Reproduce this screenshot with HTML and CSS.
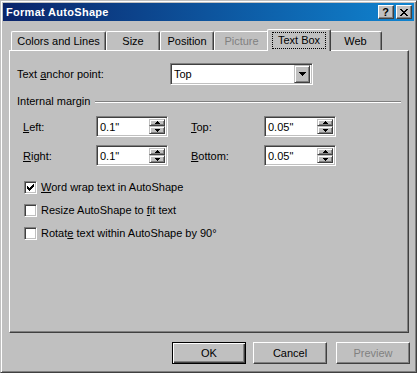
FILE: index.html
```html
<!DOCTYPE html>
<html>
<head>
<meta charset="utf-8">
<title>Format AutoShape</title>
<link rel="stylesheet" href="styles.css">
</head>
<body>
<div class="window">
  <div class="titlebar">
    <span class="title">Format AutoShape</span>
    <div class="caption-btns">
      <span class="cbtn help">?</span>
      <span class="cbtn close"><svg width="8" height="7" viewBox="0 0 8 7" shape-rendering="crispEdges"><path d="M0 0h2v1H0zM6 0h2v1H6zM1 1h2v1H1zM5 1h2v1H5zM2 2h4v1H2zM3 3h2v1H3zM2 4h4v1H2zM1 5h2v1H1zM5 5h2v1H5zM0 6h2v1H0zM6 6h2v1H6z"/></svg></span>
    </div>
  </div>

  <div class="sheet">
    <div class="tabs">
      <div class="tab w1">Colors and Lines</div>
      <div class="tab w2">Size</div>
      <div class="tab w3">Position</div>
      <div class="tab w4 disabled">Picture</div>
      <div class="tab w5 active"><span class="focus">Text Box</span></div>
      <div class="tab w6">Web</div>
    </div>
    <div class="panel">
      <div class="anchor-row">
        <span class="anchor-label">Text <u>a</u>nchor point:</span>
        <div class="combo">
          <span class="combo-text">Top</span>
          <span class="combo-btn"><svg width="7" height="4" viewBox="0 0 7 4" shape-rendering="crispEdges"><path d="M0 0h7v1H0zM1 1h5v1H1zM2 2h3v1H2zM3 3h1v1H3z"/></svg></span>
        </div>
      </div>

      <div class="group-head"><span>Internal margin</span><span class="groove"></span></div>

      <div class="margin-row">
        <div class="field">
          <span class="flabel"><u>L</u>eft:</span>
          <div class="spin">
            <span class="spin-text">0.1"</span>
            <span class="spin-btns">
              <span class="sbtn up"><svg width="5" height="3" viewBox="0 0 5 3" shape-rendering="crispEdges"><path d="M2 0h1v1H2zM1 1h3v1H1zM0 2h5v1H0z"/></svg></span>
              <span class="sbtn down"><svg width="5" height="3" viewBox="0 0 5 3" shape-rendering="crispEdges"><path d="M0 0h5v1H0zM1 1h3v1H1zM2 2h1v1H2z"/></svg></span>
            </span>
          </div>
        </div>
        <div class="field">
          <span class="flabel"><u>T</u>op:</span>
          <div class="spin">
            <span class="spin-text">0.05"</span>
            <span class="spin-btns">
              <span class="sbtn up"><svg width="5" height="3" viewBox="0 0 5 3" shape-rendering="crispEdges"><path d="M2 0h1v1H2zM1 1h3v1H1zM0 2h5v1H0z"/></svg></span>
              <span class="sbtn down"><svg width="5" height="3" viewBox="0 0 5 3" shape-rendering="crispEdges"><path d="M0 0h5v1H0zM1 1h3v1H1zM2 2h1v1H2z"/></svg></span>
            </span>
          </div>
        </div>
      </div>

      <div class="margin-row second">
        <div class="field">
          <span class="flabel"><u>R</u>ight:</span>
          <div class="spin">
            <span class="spin-text">0.1"</span>
            <span class="spin-btns">
              <span class="sbtn up"><svg width="5" height="3" viewBox="0 0 5 3" shape-rendering="crispEdges"><path d="M2 0h1v1H2zM1 1h3v1H1zM0 2h5v1H0z"/></svg></span>
              <span class="sbtn down"><svg width="5" height="3" viewBox="0 0 5 3" shape-rendering="crispEdges"><path d="M0 0h5v1H0zM1 1h3v1H1zM2 2h1v1H2z"/></svg></span>
            </span>
          </div>
        </div>
        <div class="field">
          <span class="flabel"><u>B</u>ottom:</span>
          <div class="spin">
            <span class="spin-text">0.05"</span>
            <span class="spin-btns">
              <span class="sbtn up"><svg width="5" height="3" viewBox="0 0 5 3" shape-rendering="crispEdges"><path d="M2 0h1v1H2zM1 1h3v1H1zM0 2h5v1H0z"/></svg></span>
              <span class="sbtn down"><svg width="5" height="3" viewBox="0 0 5 3" shape-rendering="crispEdges"><path d="M0 0h5v1H0zM1 1h3v1H1zM2 2h1v1H2z"/></svg></span>
            </span>
          </div>
        </div>
      </div>

      <div class="checks">
        <div class="check">
          <span class="cbox"><svg width="7" height="7" viewBox="0 0 7 7" shape-rendering="crispEdges"><path d="M6 0h1v1H6zM5 1h2v1H5zM0 2h1v1H0zM4 2h3v1H4zM0 3h2v1H0zM3 3h3v1H3zM0 4h5v1H0zM1 5h3v1H1zM2 6h1v1H2z"/></svg></span>
          <span><u>W</u>ord wrap text in AutoShape</span>
        </div>
        <div class="check">
          <span class="cbox"></span>
          <span>Resize AutoShape to <u>f</u>it text</span>
        </div>
        <div class="check">
          <span class="cbox"></span>
          <span>Rotat<u>e</u> text within AutoShape by 90°</span>
        </div>
      </div>
    </div>
  </div>

  <div class="buttons">
    <span class="btn default">OK</span>
    <span class="btn cancel">Cancel</span>
    <span class="btn preview disabled">Preview</span>
  </div>
</div>
</body>
</html>
```

FILE: styles.css
```css
html, body {
  margin: 0;
  padding: 0;
  background: #c0c0c0;
}

body {
  font-family: "Liberation Sans", Arial, sans-serif;
  font-size: 11px;
  color: #000;
}

.window {
  width: 417px;
  height: 373px;
  box-sizing: border-box;
  border: 1px solid;
  border-color: #c0c0c0 #404040 #404040 #c0c0c0;
  box-shadow: inset 1px 1px #fff, inset -1px -1px #808080;
  padding: 2px;
  background: #c0c0c0;
  display: flex;
  flex-direction: column;
}

/* Title bar */
.titlebar {
  height: 18px;
  flex: none;
  display: flex;
  align-items: center;
  justify-content: space-between;
  padding: 0 2px 0 3px;
  background: linear-gradient(to right, #0a246a, #1084d0);
  color: #fff;
}

.title {
  font-weight: bold;
  font-size: 11px;
  line-height: 18px;
  letter-spacing: 0.3px;
}

.caption-btns {
  display: flex;
  gap: 2px;
}

.cbtn {
  width: 16px;
  height: 14px;
  box-sizing: border-box;
  border: 1px solid;
  border-color: #fff #404040 #404040 #fff;
  box-shadow: inset -1px -1px #808080;
  background: #c0c0c0;
  color: #000;
  display: flex;
  align-items: center;
  justify-content: center;
}

.cbtn.help {
  font-weight: bold;
  font-size: 11px;
  line-height: 12px;
  padding-right: 1px;
}

.cbtn.close svg {
  fill: #000;
  margin-right: 1px;
}

/* Property sheet */
.sheet {
  margin: 8px 5px 0 6px;
  flex: none;
}

.tabs {
  display: flex;
  align-items: flex-end;
  height: 21px;
  padding-left: 2px;
}

.tab {
  box-sizing: border-box;
  height: 19px;
  border: 1px solid;
  border-bottom: none;
  border-color: #fff #404040 #fff #fff;
  box-shadow: inset -1px 0 #808080;
  border-radius: 2px 2px 0 0;
  text-align: center;
  line-height: 17px;
  padding-top: 1px;
  white-space: nowrap;
  background: #c0c0c0;
}

.w1 { width: 95px; }
.w2 { width: 54px; }
.w3 { width: 54px; }
.w4 { width: 55px; }
.w5 { width: 60px; }
.w6 { width: 53px; }

.tab.disabled {
  color: #808080;
}

.tab.active {
  width: 64px;
  height: 22px;
  margin: 0 -2px -1px;
  padding-top: 2px;
  position: relative;
  z-index: 1;
}

.focus {
  display: inline-block;
  border: 1px dotted #000;
  padding: 0 5px;
  line-height: 15px;
}

.panel {
  height: 283px;
  box-sizing: border-box;
  border: 1px solid;
  border-color: #fff #404040 #404040 #fff;
  box-shadow: inset -1px -1px #808080;
  padding: 12px 7px 0 7px;
}

/* Anchor row */
.anchor-row {
  display: flex;
  align-items: center;
  height: 22px;
}

.anchor-label {
  width: 153px;
}

.combo,
.spin {
  box-sizing: border-box;
  border: 1px solid;
  border-color: #808080 #fff #fff #808080;
  box-shadow: inset 1px 1px #404040, inset -1px -1px #c0c0c0;
  background: #fff;
  padding: 2px;
  display: flex;
}

.combo {
  width: 143px;
  height: 22px;
  align-items: center;
  justify-content: space-between;
}

.combo-text {
  padding-left: 1px;
}

.combo-btn,
.sbtn {
  box-sizing: border-box;
  border: 1px solid;
  border-color: #c0c0c0 #404040 #404040 #c0c0c0;
  box-shadow: inset 1px 1px #fff, inset -1px -1px #808080;
  background: #c0c0c0;
  display: flex;
  align-items: center;
  justify-content: center;
}

.combo-btn {
  width: 16px;
  height: 18px;
}

.combo-btn svg,
.sbtn svg {
  fill: #000;
}

/* Group heading */
.group-head {
  display: flex;
  align-items: center;
  height: 13px;
  margin-top: 9px;
}

.groove {
  flex: 1;
  height: 0;
  margin: 3px 0 0 5px;
  border-top: 1px solid #808080;
  border-bottom: 1px solid #fff;
}

/* Margin rows */
.margin-row {
  display: flex;
  margin-top: 9px;
  padding-left: 6px;
}

.margin-row.second {
  margin-top: 8px;
}

.field {
  display: flex;
  align-items: center;
}

.field + .field {
  margin-left: 23px;
}

.flabel {
  width: 73px;
}

.spin {
  width: 72px;
  height: 21px;
}

.spin-text {
  flex: 1;
  padding-left: 1px;
  line-height: 17px;
}

.spin-btns {
  display: flex;
  flex-direction: column;
  width: 16px;
}

.sbtn.up {
  height: 8px;
}

.sbtn.down {
  height: 9px;
}

/* Checkboxes */
.checks {
  display: flex;
  flex-direction: column;
  gap: 10px;
  margin-top: 15px;
}

.check {
  display: flex;
  align-items: center;
  height: 13px;
  margin-left: 7px;
  line-height: 13px;
  white-space: nowrap;
}

.cbox {
  width: 13px;
  height: 13px;
  box-sizing: border-box;
  flex: none;
  border: 1px solid;
  border-color: #808080 #fff #fff #808080;
  box-shadow: inset 1px 1px #404040, inset -1px -1px #c0c0c0;
  background: #fff;
  margin-right: 4px;
  display: flex;
  align-items: center;
  justify-content: center;
}

.cbox svg {
  fill: #000;
}

/* Buttons */
.buttons {
  display: flex;
  justify-content: flex-end;
  margin-top: 9px;
  padding-right: 4px;
}

.btn {
  width: 74px;
  height: 22px;
  box-sizing: border-box;
  border: 1px solid;
  border-color: #fff #404040 #404040 #fff;
  box-shadow: inset -1px -1px #808080;
  background: #c0c0c0;
  display: flex;
  align-items: center;
  justify-content: center;
}

.btn.default {
  border-color: #000;
  box-shadow: inset 1px 1px #fff, inset -1px -1px #404040, inset -2px -2px #808080;
}

.btn.cancel {
  margin-left: 7px;
}

.btn.preview {
  margin-left: 9px;
}

.btn.disabled {
  color: #808080;
}
```
